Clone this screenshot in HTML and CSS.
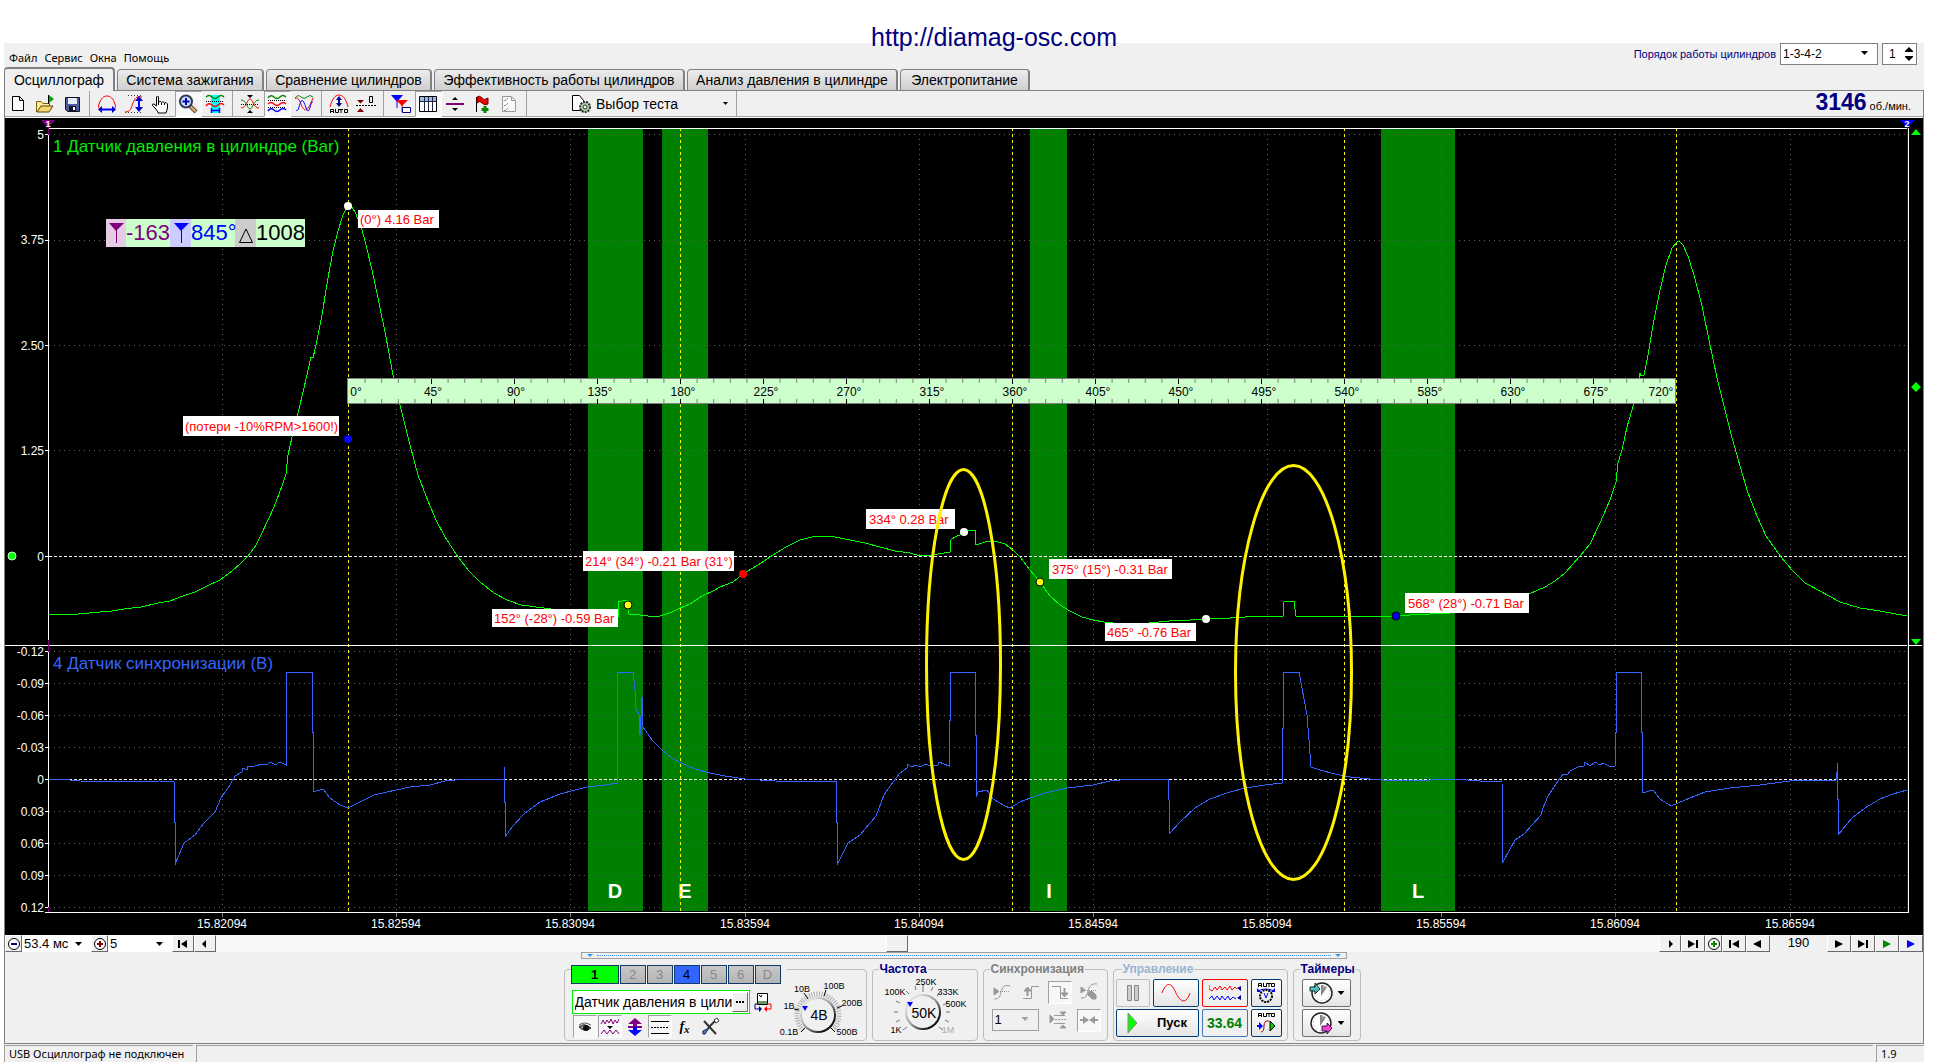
FILE: index.html
```html
<!DOCTYPE html>
<html lang="ru">
<head>
<meta charset="utf-8">
<title>Осциллограф</title>
<link rel="stylesheet" href="styles.css">
</head>
<body>
<a class="site-link" href="#">http://diamag-osc.com</a>
<div class="window">
  <header class="top">
    <nav class="menu">
      <a href="#">Файл</a><a href="#">Сервис</a><a href="#">Окна</a><a href="#">Помощь</a>
    </nav>
    <div class="order">
      <label for="order">Порядок работы цилиндров</label>
      <span class="pick pick-order"><select id="order"><option>1-3-4-2</option></select></span>
      <span class="spin"><input type="text" value="1" aria-label="Цилиндр"><svg width="8" height="14" viewBox="0 0 8 14"><path d="M0 4 4 0 8 4V5H0zM0 9H8V10L4 14 0 10z"/></svg></span>
    </div>
  </header>

  <div class="tabs" role="tablist">
    <button class="tab active" role="tab">Осциллограф</button>
    <button class="tab" role="tab">Система зажигания</button>
    <button class="tab" role="tab">Сравнение цилиндров</button>
    <button class="tab" role="tab">Эффективность работы цилиндров</button>
    <button class="tab" role="tab">Анализ давления в цилиндре</button>
    <button class="tab" role="tab">Электропитание</button>
  </div>

  <main class="workspace">
    <div class="toolbar">
      <button class="tool" aria-label="Новый"><svg class="ic" viewBox="0 0 20 20"><path d="M4.500 2.500H11.500L15.500 6.500V16.500H4.500zM11.500 2.500V6.500H15.500" fill="#fff" stroke="#000"/></svg></button>
      <button class="tool" aria-label="Открыть"><svg class="ic" viewBox="0 0 20 20"><path d="M1.500 18V7.500H6L8 9.500H14.500V12" fill="#ffe9a0" stroke="#7a6000"/><path d="M2 18 6 12H18L14 18z" fill="#f7d774" stroke="#5a4600"/><path d="M13.500 1V10" stroke="#000"/><path d="M14 1 19 5 14 9z" fill="#0a0"/></svg></button>
      <button class="tool" aria-label="Сохранить"><svg class="ic" viewBox="0 0 20 20"><path d="M3.500 3.500H17.500V17.500H5.500L3.500 15.500z" fill="#4a5a9a" stroke="#112"/><path d="M6 4H15V10H6z" fill="#e4ecf8"/><path d="M7 12H14V17H7z" fill="#112"/><path d="M11 13H13V16H11z" fill="#fff"/></svg></button>
      <i class="sep"></i>
      <button class="tool" aria-label="Ширина"><svg class="ic" viewBox="0 0 20 20" fill="none"><path d="M3 15C2 15 1 13 2 10C4 4 7 2 10 2S16 4 18 10C19 13 18 15 17 15" stroke="red"/><path d="M3 15.500H17" stroke="#00f" stroke-width="2"/><path d="M1 15.500 5 12V19zM19 15.500 15 12V19z" fill="#00c"/></svg></button>
      <button class="tool" aria-label="Высота"><svg class="ic" viewBox="0 0 20 20" fill="none"><path d="M1 18.500H19M4 1.500H19" stroke="#333" stroke-dasharray="1 2"/><path d="M1 18C7 18 7 14 9 9S12 2 18 3" stroke="red"/><path d="M15 5V15" stroke="#00f" stroke-width="2"/><path d="M11 7 15 2 19 7zM11 13 15 18 19 13z" fill="#00c"/></svg></button>
      <button class="tool" aria-label="Рука"><svg class="ic" viewBox="0 0 20 20"><path d="M7 18 4 14 1.500 11.500Q1 9.500 3 10L5.500 12V3Q6.500 1 7.500 3V8.500Q9 6 10.500 8.500Q12 6.500 13.500 9Q15 7.500 16.500 10V14L15 19H7zM10.500 9V11M13.500 9V11M7.500 8V11" fill="#fff" stroke="#000"/></svg></button>
      <button class="tool pressed" aria-label="Лупа"><svg class="ic" viewBox="0 0 20 20"><path d="M12 12 18 18" stroke="#543" stroke-width="4"/><path d="M12 12 17.500 17.500" stroke="#e8b870" stroke-width="2"/><circle cx="8" cy="7.500" r="6" fill="#c8e0ff" stroke="#335" stroke-width="2"/><path d="M8 4V11M4.500 7.500H11.500" stroke="#00a" stroke-width="2"/></svg></button>
      <button class="tool" aria-label="Участок"><svg class="ic" viewBox="0 0 20 20" fill="none"><path d="M6 1H15V19H6z" fill="#0ff"/><path d="M1 3Q4 0 7 3T13 3T19 3" stroke="#080" stroke-width="1.500"/><path d="M1 7.500H19" stroke="#000" stroke-dasharray="1 1"/><path d="M1 12Q4 8 7 11T13 11T19 11" stroke="red" stroke-width="1.500"/><path d="M6.500 14V19M14.500 14V19M7 16.500H14" stroke="#00f" stroke-width="1.500"/></svg></button>
      <i class="sep"></i>
      <button class="tool" aria-label="Свести"><svg class="ic" viewBox="0 0 20 20" fill="none"><path d="M1 14C7 14 7 5 10 5S13 14 19 14" stroke="red"/><path d="M1 6C7 6 7 15 10 15S13 6 19 6" stroke="#080"/><path d="M1 10.500H19" stroke="#000" stroke-dasharray="1 1"/><path d="M7 1H13L10 4zM7 19H13L10 16z" fill="#000"/></svg></button>
      <button class="tool pressed" aria-label="Раздельно"><svg class="ic" viewBox="0 0 20 20" fill="none"><path d="M1 4Q4 0 7 3T13 3T19 3" stroke="#080" stroke-width="1.500"/><path d="M1 10Q4 7 7 10T13 10T19 10" stroke="red" stroke-width="1.500"/><path d="M1 17Q4 13 7 16T13 16T19 16" stroke="#00f" stroke-width="1.500"/><path d="M1 6.500H19M1 13.500H19" stroke="#000" stroke-dasharray="1 1"/></svg></button>
      <button class="tool" aria-label="Наложить"><svg class="ic" viewBox="0 0 20 20" fill="none"><path d="M1 4Q4 0 7 3T13 3T19 3" stroke="#080"/><path d="M1 5C5 1 6 10 9 14S14 16 19 4" stroke="red"/><path d="M2 16C5 20 6 3 9 7S13 20 15 16S17 7 19 8" stroke="#00f"/></svg></button>
      <i class="sep"></i>
      <button class="tool" aria-label="Авто"><svg class="ic" viewBox="0 0 20 20" fill="none"><path d="M1 13C3 5 6 1 10 1S17 5 19 13" stroke="red"/><path d="M10 4V11" stroke="#008" stroke-width="2"/><path d="M7 6 10 2 13 6zM7 9 10 13 13 9z" fill="#008"/><path d="M1.500 19V15.500H4.500V19M1.500 17.500H4.500M6.500 15V18.500H9.500V15M10 15.500H14M12 15V19M15.500 15.500H18.500V18.500H15.500z" stroke="#000"/></svg></button>
      <button class="tool" aria-label="Ноль"><svg class="ic" viewBox="0 0 20 20" fill="none"><path d="M0 11.500H20" stroke="#000" stroke-dasharray="2 1"/><path d="M1 6H8L4.500 9.500zM1 18H8L4.500 14z" fill="#800000"/><path d="M13.500 2.500H16.500V8.500H13.500z" stroke="#000"/></svg></button>
      <i class="sep"></i>
      <button class="tool" aria-label="Маркеры"><svg class="ic" viewBox="0 0 20 20" fill="none"><path d="M0 1H12L6 8z" fill="#00f"/><path d="M6 6V14" stroke="#00f"/><path d="M5 6H17L11 12z" fill="red"/><path d="M11 10V18" stroke="red"/><path d="M11.500 13.500H19.500V18.500H11.500z" fill="#fff" stroke="#008"/></svg></button>
      <button class="tool pressed" aria-label="Таблица"><svg class="ic" viewBox="0 0 20 20" fill="none"><path d="M1.500 2.500H18.500V17.500H1.500z" fill="#fff" stroke="#000"/><path d="M2 3H18V7H2z" fill="#9bd"/><path d="M2 7.500H18M6.500 3V17M10.500 3V17M14.500 3V17" stroke="#224"/></svg></button>
      <button class="tool" aria-label="Линия"><svg class="ic" viewBox="0 0 20 20"><path d="M1 9H19V11H1z" fill="#800080"/><path d="M7 6H13L10 3zM7 14H13L10 17z"/></svg></button>
      <button class="tool" aria-label="Флаг"><svg class="ic" viewBox="0 0 20 20"><path d="M4.500 3V18" stroke="#000"/><path d="M5 3Q8 1 10 4T16 4V10Q12 12 10 9T5 9z" fill="#e00" stroke="#600"/><path d="M13 12V19M9.500 15.500H16.500" stroke="#080" stroke-width="3"/></svg></button>
      <button class="tool" aria-label="Список"><svg class="ic" viewBox="0 0 20 20" fill="none"><path d="M3.500 2.500H12.500L16.500 6.500V17.500H3.500z" fill="#f8f8f8" stroke="#999"/><path d="M5 6 6 7 9 4M5 11 6 12 9 9M5 16 6 17 9 14M12.500 3V6.500H16" stroke="#999"/></svg></button>
      <i class="sep"></i>
      <button class="test"><svg class="ic" viewBox="0 0 20 20"><path d="M1.500 1.500H8.500L12.500 6.500V16.500H1.500z" fill="#fff" stroke="#000"/><circle cx="14" cy="13" r="5" fill="#bcb" stroke="#232" stroke-width="2" stroke-dasharray="2 1"/><circle cx="14" cy="13" r="2" fill="#fff" stroke="#232"/></svg><span>Выбор теста</span><i class="caret"></i></button>
      <i class="sep"></i>
      <output class="rpm"><b>3146</b> об./мин.</output>
    </div>

    <svg class="chart" viewBox="5 118 1918 817" role="img" aria-label="Осциллограмма">
      <path class="band" d="M588 129H643V911H588zM662 129H708V911H662zM1030 129H1067V911H1030zM1381 129H1455V911H1381z"/>
      <path class="grid" d="M49 134.500H1906M49 240.500H1906M49 345.500H1906M49 450.500H1906M49 651.500H1906M49 683.500H1906M49 715.500H1906M49 747.500H1906M49 811.500H1906M49 843.500H1906M49 875.500H1906M49 907.500H1906"/>
      <path class="grid grid-v" d="M222.500 134V911M396.500 134V911M570.500 134V911M745.500 134V911M919.500 134V911M1093.500 134V911M1267.500 134V911M1441.500 134V911M1615.500 134V911M1790.500 134V911"/>
      <path class="zero" d="M49 556.500H1906M49 779.500H1906"/>
      <g class="band-name"><text x="615" y="898">D</text><text x="685" y="898">E</text><text x="1049" y="898">I</text><text x="1418" y="898">L</text></g>
      <path class="cursor" d="M348.500 128V911M680.500 128V911M1012.500 128V911M1344.500 128V911M1676.500 128V911"/>

      <path class="trace pressure" d="M49 614L62 615 78 614 100 612 112 611 124 609 141 607 158 603 170 601 183 596 195 592 207 586 220 580 232 571 241 563 248 556 256 545 262 533 268 520 274 507 279 494 283 483 286 474 288 455 292 437 298 413 304 388 311 357 313 358 316 345 322 315 328 278 333 251 338 231 343 215 348 206 351 206 355 212 361 226 366 245 372 270 378 298 386 337 393 375 400 405 410 445 418 475 428 501 436 520 445 537 458 557 469 571 480 582 494 593 507 600 521 605 544 608 580 613 618 616 618 602 622 601 628 600 629 614 640 615 648 616 660 616 672 612 680 608 690 604 702 596 713 591 720 587 733 582 743 574 758 565 773 555 786 547 800 540 812 537 825 536 835 537 850 540 865 543 880 547 895 551 910 553 920 556 932 555 950 552 951 540 955 537 962 534 968 531 975 530 976 545 985 542 995 541 1005 544 1013 550 1020 557 1030 570 1040 582 1050 596 1060 605 1070 611 1082 617 1093 620 1104 622 1130 625 1169 621 1190 620 1206 619 1230 618 1245 617 1283 616 1284 602 1294 601 1296 616 1395 616 1410 615 1450 613 1490 607 1529 594 1545 587 1555 581 1565 573 1580 556 1590 544 1600 523 1610 500 1616 482 1618 463 1622 450 1627 427 1634 403 1640 373 1641 376 1644 375 1648 355 1653 325 1660 290 1666 265 1672 248 1677 242 1679 241 1683 245 1688 256 1694 275 1702 306 1709 340 1717 378 1724 406 1731 434 1740 466 1748 493 1757 516 1766 536 1781 557 1792 570 1805 583 1820 591 1840 602 1860 608 1880 611 1907 616"/>
      <path class="trace sync" d="M49 779H60L80 781 120 782 160 781 174 782V822H175V865L176 862 184 843 195 835 204 823 215 812 221 798 230 785 235 776 242 772 243 768 247 770 248 766 255 766 262 764 266 765 271 762 275 765 280 762 286 765V672H312V732H313V792L323 789 330 798 340 805 348 808 360 802 374 795 396 790 410 787 430 785 445 781 465 779H504V767 802H505V837L512 827 524 814 540 802 550 798 560 794 575 790 587 787 605 785 617 783V672H633L635 690V708L639 714 640 735 642 697 643 727 652 740 662 750 672 758 681 763 695 769 710 773 725 776 745 779 775 781 836 782V822H837V865L848 843 860 835 876 816 884 795 893 782 900 773 907 768 908 764 911 767 916 765 920 767 926 764 930 766 938 765 939 762 949 766V720H950V672H975V735H976V797L978 792 987 790 993 799 1005 806 1010 808 1020 802 1030 798 1045 793 1067 788 1093 785 1110 781 1130 779H1168L1169 800 1170 833 1180 822 1195 808 1210 799 1230 792 1245 788 1265 785 1282 783V728H1283V672H1299L1302 688 1307 715 1309 740 1311 767 1320 770 1335 774 1350 777 1370 779 1395 781 1430 780 1455 779 1480 781 1502 782 1503 862 1515 840 1524 834 1541 815 1543 808 1548 796 1558 781 1563 774 1568 774 1570 771 1578 767 1584 766 1585 762 1590 766 1595 762 1600 765 1603 763 1611 767 1615 766V732H1616V672H1641V732H1642V793L1653 790 1660 799 1671 806 1685 800 1705 792 1730 788 1760 785 1790 781 1836 780V772H1837V763 799H1838V835L1852 818 1865 808 1880 799 1893 794 1907 790"/>

      <g class="axis"><path d="M48.500 134V912M48 128.500H1908M5 645.500H1922M45 912.500H1908M1908.500 128V913"/>
      <path d="M45 134.500H48M45 240.500H48M45 345.500H48M45 450.500H48M45 556.500H48M45 651.500H48M45 683.500H48M45 715.500H48M45 747.500H48M45 779.500H48M45 811.500H48M45 843.500H48M45 875.500H48M45 907.500H48"/></g>
      <path class="x-tick" d="M222.500 913V917M396.500 913V917M570.500 913V917M745.500 913V917M919.500 913V917M1093.500 913V917M1267.500 913V917M1441.500 913V917M1615.500 913V917M1790.500 913V917"/>
      <g class="y-label"><text x="44" y="139">5</text><text x="44" y="244">3.75</text><text x="44" y="350">2.50</text><text x="44" y="455">1.25</text><text x="44" y="561">0</text><text x="44" y="656">-0.12</text><text x="44" y="688">-0.09</text><text x="44" y="720">-0.06</text><text x="44" y="752">-0.03</text><text x="44" y="784">0</text><text x="44" y="816">0.03</text><text x="44" y="848">0.06</text><text x="44" y="880">0.09</text><text x="44" y="912">0.12</text></g>
      <g class="x-label"><text x="222" y="928">15.82094</text><text x="396" y="928">15.82594</text><text x="570" y="928">15.83094</text><text x="745" y="928">15.83594</text><text x="919" y="928">15.84094</text><text x="1093" y="928">15.84594</text><text x="1267" y="928">15.85094</text><text x="1441" y="928">15.85594</text><text x="1615" y="928">15.86094</text><text x="1790" y="928">15.86594</text></g>
      <text class="channel-name green" x="53" y="152">1 Датчик давления в цилиндре (Bar)</text>
      <text class="channel-name blue" x="53" y="669">4 Датчик синхронизации (В)</text>

      <path d="M41 120H55L48 128z" fill="#800080"/><path d="M48.500 126V135M48.500 640V652M48.500 907V912" stroke="#800080"/>
      <path d="M1900 120H1915L1907 128z" fill="#00f"/><path d="M1907.500 126V912" stroke="#00f"/>
      <g class="flag-no"><text x="48" y="127">1</text><text x="1907" y="127">2</text></g>
      <path d="M1911 135H1921L1916 129zM1916 382L1921 387 1916 392 1911 387zM1911 639H1921L1916 645z" fill="#0f0"/>
      <circle cx="12" cy="556" r="4" fill="#0f0" stroke="#cfc"/>

      <g class="ruler">
        <path class="ruler-box" d="M347.500 378.500H1675.500V403.500H347.500z"/>
        <path class="minor" d="M364.600 381H1675M364.600 401H1675"/>
        <path class="major" d="M431 381.500H1632M431 401.500H1632"/>
        <text x="356" y="396">0°</text><text x="433" y="396">45°</text><text x="516" y="396">90°</text><text x="600" y="396">135°</text><text x="683" y="396">180°</text><text x="766" y="396">225°</text><text x="849" y="396">270°</text><text x="932" y="396">315°</text><text x="1015" y="396">360°</text><text x="1098" y="396">405°</text><text x="1181" y="396">450°</text><text x="1264" y="396">495°</text><text x="1347" y="396">540°</text><text x="1430" y="396">585°</text><text x="1513" y="396">630°</text><text x="1596" y="396">675°</text><text x="1661" y="396">720°</text>
      </g>

      <g class="readout">
        <path d="M106 219H305V247H106z" fill="#cfc"/><path d="M106 219H126V247H106z" fill="#e4cce4"/><path d="M170 219H191V247H170z" fill="#ccf"/><path d="M235 219H256V247H235z" fill="#ccc"/>
        <path d="M109 223H124L116 231zM116 230H117V243H116z" fill="#800080"/><path d="M174 223H189L181 231zM181 230H182V243H181z" fill="#00f"/><path d="M246 229L252.500 242.500H239.500z" fill="none" stroke="#000"/>
        <text x="126" y="240" fill="#800080">-163</text><text x="191" y="240" fill="#00f">845°</text><text x="256" y="240">1008</text>
      </g>

      <path class="note-box" d="M358 210H439V228H358zM183 416H339V436H183zM492 609H618V627H492zM583 551H734V571H583zM866 509H955V529H866zM1049 559H1172V579H1049zM1105 623H1196V641H1105zM1405 593H1529V613H1405z"/>
      <g class="note"><text x="360" y="224">(0°) 4.16 Bar</text><text x="185" y="431">(потери -10%RPM&gt;1600!)</text><text x="494" y="623">152° (-28°) -0.59 Bar</text><text x="585" y="566">214° (34°) -0.21 Bar (31°)</text><text x="869" y="524">334° 0.28 Bar</text><text x="1052" y="574">375° (15°) -0.31 Bar</text><text x="1107" y="637">465° -0.76 Bar</text><text x="1408" y="608">568° (28°) -0.71 Bar</text></g>
      <g class="dots"><circle cx="348" cy="206" r="4" fill="#fff"/><circle cx="348" cy="439" r="4" fill="#00f"/><circle cx="628" cy="605" r="4" fill="#ff0" stroke="#000"/><circle cx="743" cy="574" r="4" fill="red"/><circle cx="964" cy="532" r="4" fill="#fff"/><circle cx="1040" cy="582" r="4" fill="#ff0" stroke="#000"/><circle cx="1206" cy="619" r="4" fill="#fff"/><circle cx="1396" cy="616" r="4" fill="#00f" stroke="#000"/></g>
      <ellipse class="mark" cx="963.500" cy="664.500" rx="37" ry="195"/><ellipse class="mark" cx="1293.500" cy="672.500" rx="58" ry="207"/>
    </svg>

    <div class="scroll">
      <button class="key w16" aria-label="Уменьшить"><svg width="14" height="14" viewBox="0 0 14 14"><circle cx="7" cy="7" r="5.500" fill="#fff" stroke="#000"/><path d="M4 6H10V8H4z" fill="#008"/></svg></button>
      <span class="pick pick-time"><select aria-label="Время"><option>53.4 мс</option></select></span>
      <button class="key w16" aria-label="Увеличить"><svg width="14" height="14" viewBox="0 0 14 14"><circle cx="7" cy="7" r="5.500" fill="#fff" stroke="#000"/><path d="M4 6H6V4H8V6H10V8H8V10H6V8H4z" fill="#800"/></svg></button>
      <span class="pick pick-scale"><select aria-label="Масштаб"><option>5</option></select></span>
      <button class="key" aria-label="В начало"><svg width="10" height="8" viewBox="0 0 10 8"><path d="M0 0H2V8H0zM9 0V8L3 4z"/></svg></button>
      <button class="key" aria-label="Назад"><svg width="10" height="8" viewBox="0 0 10 8"><path d="M6 0V8L2 4z"/></svg></button>
      <div class="track"><button class="thumb" aria-label="Прокрутка"></button></div>
      <button class="key" aria-label="Вперёд"><svg width="10" height="8" viewBox="0 0 10 8"><path d="M4 0V8L8 4z"/></svg></button>
      <button class="key wide" aria-label="В конец"><svg width="10" height="8" viewBox="0 0 10 8"><path d="M8 0H10V8H8zM0 0V8L7 4z"/></svg></button>
      <button class="key w16" aria-label="Добавить"><svg width="14" height="14" viewBox="0 0 14 14"><circle cx="7" cy="7" r="5.500" fill="#fff" stroke="#000"/><path d="M4 6H6V4H8V6H10V8H8V10H6V8H4z" fill="#080"/></svg></button>
      <button class="key wide" aria-label="Первый кадр"><svg width="10" height="8" viewBox="0 0 10 8"><path d="M0 0H2V8H0zM10 0V8L3 4z"/></svg></button>
      <button class="key wide" aria-label="Пред. кадр"><svg width="10" height="8" viewBox="0 0 10 8"><path d="M8 0V8L0 4z"/></svg></button>
      <output class="frame">190</output>
      <button class="key wide" aria-label="След. кадр"><svg width="10" height="8" viewBox="0 0 10 8"><path d="M1 0V8L9 4z"/></svg></button>
      <button class="key wide" aria-label="Последний кадр"><svg width="10" height="8" viewBox="0 0 10 8"><path d="M8 0H10V8H8zM0 0V8L7 4z"/></svg></button>
      <button class="key wide" aria-label="Воспроизвести"><svg width="10" height="8" viewBox="0 0 10 8"><path d="M1 0V8L9 4z" fill="#080"/></svg></button>
      <button class="key wide" aria-label="Воспроизвести всё"><svg width="10" height="8" viewBox="0 0 10 8"><path d="M1 0V8L9 4z" fill="#00f"/></svg></button>
    </div>

    <div class="fold"><i></i><span></span><i></i></div>

    <div class="panel">
      <section class="group channel">
        <div class="channel-left">
          <div class="channels"><button class="ch on1">1</button><button class="ch">2</button><button class="ch">3</button><button class="ch on4">4</button><button class="ch">5</button><button class="ch">6</button><button class="ch">D</button></div>
          <div class="sensor"><span class="sensor-box"><input type="text" value="Датчик давления в цилиндре" aria-label="Датчик"><button aria-label="Выбрать датчик"><svg width="8" height="2" viewBox="0 0 8 2"><path d="M0 0H2V2H0zM3 0H5V2H3zM6 0H8V2H6z"/></svg></button></span>
            <svg class="ic" viewBox="0 0 20 20"><path d="M4.500 1.500H14.500V12.500H4.500z" fill="#fff" stroke="#000"/><path d="M5 9H14V12H5z" fill="#696"/><path d="M6 3 8 5 9 3" stroke="#000" fill="none"/><path d="M5 12H2V17H7" fill="none" stroke="#008"/><path d="M6 14V20L9 17z" fill="#008"/><path d="M14 12H18V17H13" fill="none" stroke="red"/><path d="M14 14V20L11 17z" fill="red"/></svg></div>
          <div class="modes">
            <button class="mode pressed" aria-label="Показать"><svg class="ic" viewBox="0 0 20 20"><path d="M4 10Q9 5 16 11Q10 16 4 10z" fill="#987" stroke="#222"/><circle cx="11" cy="11" r="3" fill="#111"/><path d="M4 8Q9 4 16 8" stroke="#555" fill="none"/></svg></button>
            <button class="mode pressed" aria-label="Инверсия"><svg class="ic" viewBox="0 0 20 20" fill="none" stroke="#800080"><path d="M1 7 3 3 5 7 7 3 9 6 11 2 13 7 15 3 17 6 19 2M1 17 4 13 7 17 10 13 13 17 16 13 19 17"/><path d="M7 9H13L10 12z" fill="#000" stroke="none"/></svg></button>
            <button class="mode" aria-label="Сдвиг"><svg class="ic" viewBox="0 0 20 20"><path d="M10 1 17 7H12V10H8V7H3zM3 9H8V11H3zM12 9H17V11H12z" fill="#800080"/><path d="M10 19 17 13H12V10H8V13H3z" fill="#00f"/></svg></button>
            <button class="mode pressed" aria-label="Линии"><svg class="ic" viewBox="0 0 20 20" stroke="#000"><path d="M1 4.500H19M1 16.500H19"/><path d="M1 10.500H19" stroke-dasharray="2 1"/></svg></button>
            <button class="mode fx" aria-label="Функция"><i>f</i><sub>x</sub></button>
            <button class="mode" aria-label="Настройка"><svg class="ic" viewBox="0 0 20 20"><path d="M4 4 16 17M16 3 8 11" stroke="#333" stroke-width="2"/><path d="M17 1 19 4 16 6 14 3z" fill="#fff" stroke="#333"/><path d="M9 11 5 17Q2 18 3 14z" fill="#57b" stroke="#124"/></svg></button>
          </div>
        </div>
        <svg class="dial" viewBox="765 968 105 70" aria-label="Чувствительность">
          <g fill="none"><path d="M803.100 1027.900A21 21 0 1 1 832.900 1027.900" stroke="#aaa" stroke-width="5" stroke-dasharray="1 1.500"/>
          <path d="M806 1025 801 1030M799 1008 794 1007M808 997 804 991M824 994 826 988M837 1006 842 1004M830 1025 835 1030" stroke="#000"/></g>
          <circle cx="818" cy="1013" r="18" fill="url(#knob)" /><circle cx="818" cy="1013" r="16" fill="#f0f0f0"/>
          <path d="M802 1004H808L805 1009z" fill="#00f"/>
          <g class="dial-no"><text x="789" y="1033">0.1B</text><text x="789" y="1007">1B</text><text x="802" y="990">10B</text><text x="834" y="987">100B</text><text x="852" y="1004">200B</text><text x="847" y="1033">500B</text></g>
          <text class="dial-val" x="819" y="1018">4B</text>
          <defs><linearGradient id="knob" x1="0" y1="0" x2="1" y2="1"><stop offset=".2" stop-color="#ddd"/><stop offset=".5" stop-color="#999"/><stop offset=".8" stop-color="#111"/></linearGradient></defs>
        </svg>
      </section>

      <fieldset class="group"><legend>Частота</legend>
        <svg class="dial dial-f" viewBox="874 976 100 62" aria-label="Частота">
          <path d="M908 1027 904 1030M901 1020 897 1022M899 1012H895M901 1003 897 1001M910 994 907 991M917 990 916 986M924 992V984M932 991 934 987M938 996 941 992M944 1005 949 1003M947 1012H951M946 1020 950 1022M940 1027 944 1030" fill="none" stroke="#777"/>
          <circle cx="924" cy="1012" r="18" fill="url(#knob)"/><circle cx="924" cy="1012" r="16" fill="#f0f0f0"/>
          <path d="M908 1002H914L911 1007z" fill="#00f"/>
          <g class="dial-no"><text x="897" y="1033">1K</text><text x="896" y="995">100K</text><text x="927" y="985">250K</text><text x="949" y="995">333K</text><text x="957" y="1007">500K</text><text x="949" y="1033" fill="#aaa">1M</text></g>
          <text class="dial-val" x="925" y="1018">50K</text>
        </svg>
      </fieldset>

      <fieldset class="group sync-box" disabled><legend>Синхронизация</legend>
        <div class="row">
          <button class="mode" aria-label="Без синхронизации"><svg class="ic" viewBox="0 0 20 20" fill="none" stroke="#999"><path d="M2 17C8 17 8 14 9 10S12 2 18 4"/><path d="M2 9.500H18" stroke-dasharray="1 1"/><path d="M2 6V13L7 9.500z" fill="#999"/></svg></button>
          <button class="mode" aria-label="Фронт"><svg class="ic" viewBox="0 0 20 20" fill="none" stroke="#999"><path d="M2 16.500H10.500V4.500H18"/><path d="M6.500 8V14" stroke-width="2"/><path d="M3 9H10L6.500 5z" fill="#999"/></svg></button>
          <button class="mode pressed" aria-label="Спад"><svg class="ic" viewBox="0 0 20 20" fill="none" stroke="#999"><path d="M2 4.500H10.500V16.500H18"/><path d="M14.500 6V12" stroke-width="2"/><path d="M11 11H18L14.500 15z" fill="#999"/></svg></button>
          <button class="mode" aria-label="Вручную"><svg class="ic" viewBox="0 0 20 20" fill="none" stroke="#999"><path d="M2 16C8 16 8 13 9 9S12 1 18 2"/><path d="M2 8.500H18" stroke-dasharray="1 1"/><path d="M2 5V11L6 8zM9 10 13 9 17 13V17H13L9 13z" fill="#999"/></svg></button>
        </div>
        <div class="row">
          <span class="pick pick-sync"><select aria-label="Канал"><option>1</option></select></span>
          <button class="mode" aria-label="Уровень"><svg class="ic" viewBox="0 0 20 20" fill="none" stroke="#999"><path d="M2 5V13L6 9z" fill="#999"/><path d="M6 5.500H17M6 13.500H17M12 2H18L15 5zM12 18H18L15 15z" fill="#999"/><path d="M7 9.500H18" stroke-dasharray="2 1"/></svg></button>
          <button class="mode pressed" aria-label="Центр"><svg class="ic" viewBox="0 0 20 20" fill="#999"><path d="M1 9H4V6L10 10 4 14V11H1zM19 9H16V6L10 10 16 14V11H19z"/></svg></button>
        </div>
      </fieldset>

      <fieldset class="group control"><legend>Управление</legend>
        <button class="cmd off" aria-label="Пауза"><svg width="12" height="16" viewBox="0 0 12 16"><path d="M.500.500H4.500V15.500H.500zM7.500.500H11.500V15.500H7.500z" fill="#ccc" stroke="#888"/></svg></button>
        <button class="cmd" aria-label="Синус"><svg width="30" height="20" viewBox="0 0 30 20" fill="none" stroke="red"><path d="M1 10C5 -1 10 -1 14 8S24 24 29 10"/></svg></button>
        <button class="cmd red" aria-label="Сигналы"><svg width="32" height="20" viewBox="0 0 32 20" fill="none"><path d="M0 2V6L3 8 6 4 8 7 11 3 13 7 16 4 18 7 21 3 23 7 26 4 28 6" stroke="red"/><path d="M0 16 3 13 5 17 8 13 11 17 13 13 16 17 19 13 21 17 24 14 27 16" stroke="#00f"/><path d="M32 3V8L28 5zM32 12V17L28 15z" fill="#008"/></svg></button>
        <button class="cmd" aria-label="Авто напряжение"><svg width="20" height="22" viewBox="0 0 20 22" fill="none" stroke="#000"><path d="M2.500 5V1.500H5.500V5M2.500 3.500H5.500M7.500 1V4.500H10.500V1M11 1.500H15M13 1V5M15.500 1.500H18.500V4.500H15.500z"/><path d="M2 9Q10 5 18 9" stroke="#00f"/><path d="M1 6V10H5zM19 6V10H15z" fill="#00f" stroke="none"/><circle cx="10" cy="14" r="6" stroke-width="2" stroke-dasharray="2 1"/><path d="M8 11 10 16 12 11" stroke="#00f"/></svg></button>
        <button class="cmd start"><svg width="10" height="20" viewBox="0 0 10 20"><path d="M1 0V20L10 10z" fill="#0f0" stroke="#888"/></svg><span>Пуск</span></button>
        <output class="cmd freq">33.64</output>
        <button class="cmd" aria-label="Авто запуск"><svg width="20" height="22" viewBox="0 0 20 22" fill="none" stroke="#000"><path d="M2.500 5V1.500H5.500V5M2.500 3.500H5.500M7.500 1V4.500H10.500V1M11 1.500H15M13 1V5M15.500 1.500H18.500V4.500H15.500z"/><path d="M1 14H4" stroke="#00f" stroke-width="2"/><path d="M3 10V18L7 14z" fill="#00f" stroke="none"/><path d="M5 20Q8 20 8 14T13 9" stroke="#a00"/><path d="M14 9V19L19 14z" fill="#0c0"/></svg></button>
      </fieldset>

      <fieldset class="group timers"><legend>Таймеры</legend>
        <button class="cmd timer" aria-label="Таймер пуска"><svg width="24" height="24" viewBox="0 0 24 24"><circle cx="13" cy="12" r="10" fill="#fff" stroke="#222" stroke-width="1.500"/><path d="M13 4V12L17 6" fill="#aaa" stroke="#888" stroke-width="2"/><circle cx="13" cy="12" r="7.500" fill="none" stroke="#aaa" stroke-dasharray="1 3"/><path d="M1 6H6V2L11 8 6 13V10H1z" fill="#5bb" stroke="#133"/></svg><i class="caret"></i></button>
        <button class="cmd timer" aria-label="Таймер остановки"><svg width="24" height="24" viewBox="0 0 24 24"><circle cx="12" cy="12" r="10" fill="#fff" stroke="#222" stroke-width="1.500"/><path d="M12 4V12L16 6" fill="#aaa" stroke="#888" stroke-width="2"/><circle cx="12" cy="12" r="7.500" fill="none" stroke="#aaa" stroke-dasharray="1 3"/><path d="M13 15H18V12L23 17 18 23V20H13z" fill="#e4c" stroke="#415"/></svg><i class="caret"></i></button>
      </fieldset>
    </div>
  </main>

  <footer class="status"><span>USB Осциллограф не подключен</span><span></span><span>1.9</span></footer>
</div>
</body>
</html>
```
FILE: styles.css
```css
* { box-sizing: border-box; }
body { margin: 0; background: #fff; color: #000; font: 13px/16px "Liberation Sans", Arial, sans-serif; }
button, input, select, output { font: inherit; color: inherit; margin: 0; padding: 0; border: 0; border-radius: 0; background: none; }
svg { display: block; flex: none; }
i { font-style: normal; }

.site-link { position: absolute; top: 23px; left: 50px; right: 0; margin: 0 auto; width: max-content; color: #000080; font-size: 25px; line-height: 28px; text-decoration: none; }
.window { margin: 43px 14px 5px 4px; background: #f0f0f0; }

.top { display: flex; justify-content: space-between; height: 24px; }
.menu { display: flex; gap: 7px; padding: 7px 0 0 5px; font: 11px/16px "Noto Sans", sans-serif; }
.menu a { color: #000; text-decoration: none; }
.order { display: flex; align-items: center; gap: 4px; height: 22px; margin-right: 7px; color: #000080; font-size: 11px; }
.order select, .order input { color: #000; font-size: 12px; }
.pick { position: relative; display: flex; background: #fff; }
.pick select { appearance: none; width: 100%; padding-left: 2px; }
.pick::after, .caret { content: ""; width: 7px; height: 4px; background: #000; clip-path: polygon(0 0, 100% 0, 50% 100%); }
.pick::after { position: absolute; right: 9px; top: 7px; pointer-events: none; }
.pick-order { width: 98px; height: 22px; border: 1px solid #808080; }
.spin { display: flex; align-items: center; gap: 4px; width: 35px; height: 22px; padding: 0 6px; border: 1px solid #808080; background: #fff; }
.spin input { width: 12px; }

.tabs { display: grid; grid-template-columns: 111px 147px 166px 251px 211px 130px; column-gap: 2px; align-items: end; height: 24px; margin-bottom: -1px; position: relative; }
.tab { height: 22px; border: 1px solid #808080; border-right-width: 2px; border-radius: 4px 4px 0 0; background: linear-gradient(#ececec, #cfcfcf); font-size: 14px; white-space: nowrap; }
.tab.active { height: 24px; border-width: 2px 2px 0 1px; background: #f0f0f0; }

.workspace { border: 1px solid #808080; }
.toolbar { display: flex; align-items: center; height: 26px; border-bottom: 1px solid #a0a0a0; background: #f0f0f0; }
.tool { display: flex; align-items: center; justify-content: center; width: 27px; height: 26px; padding-right: 1px; }
.ic { width: 20px; height: 20px; }
.pressed { background: repeating-conic-gradient(#fff 0 25%, #f0f0f0 0 50%) 0 0 / 2px 2px; border: 1px solid; border-color: #a0a0a0 #fff #fff #a0a0a0; }
.sep { width: 8px; height: 26px; background: linear-gradient(#a0a0a0, #a0a0a0) 3px 0 / 1px 100% no-repeat; }
.test { display: flex; align-items: center; gap: 5px; width: 202px; padding-left: 40px; font-size: 14px; }
.test .caret { margin-left: auto; margin-right: 5px; width: 5px; height: 3px; }
.rpm { margin-left: auto; margin-right: 12px; font-size: 11px; }
.rpm b { color: #000080; font-size: 23px; }

.chart { width: 100%; height: auto; background: #000; border-top: 1px solid #fff; }
.band { fill: #008000; }
.grid { stroke: #606060; stroke-dasharray: 1 4; fill: none; }
.zero { stroke: #fff; stroke-dasharray: 3 2; fill: none; }
.cursor { stroke: #ff0; stroke-dasharray: 3 3; fill: none; }
.band-name { fill: #fff; font-weight: bold; font-size: 20px; text-anchor: middle; }
.trace { fill: none; shape-rendering: crispEdges; }
.pressure { stroke: #0f0; }
.sync { stroke: #36f; }
.axis { stroke: #fff; fill: none; }
.x-tick { stroke: #808080; }
.y-label, .x-label { fill: #fff; font-size: 12px; }
.y-label { text-anchor: end; }
.x-label { text-anchor: middle; }
.channel-name { font-size: 17px; }
.green { fill: #0e0; }
.blue { fill: #36f; }
.flag-no { fill: #fff; font-size: 9px; font-weight: bold; text-anchor: middle; }
.ruler { font-size: 12px; text-anchor: middle; }
.ruler-box { fill: #cfc; stroke: #808080; }
.minor { stroke: #808080; stroke-width: 4; stroke-dasharray: 1 15.6; }
.major { stroke: #000; stroke-width: 5; stroke-dasharray: 1 82; }
.readout { font-size: 22px; }
.note-box { fill: #fff; }
.note { fill: red; font-size: 13px; }
.mark { fill: none; stroke: #fff200; stroke-width: 3; }

.scroll { display: flex; height: 17px; background: #fff; }
.key, .thumb { display: flex; align-items: center; justify-content: center; width: 22px; background: #f0f0f0; border: 1px solid; border-color: #fff #696969 #696969 #fff; }
.key.w16 { width: 17px; }
.key.wide { width: 24px; }
.pick-time { width: 69px; }
.pick-scale { width: 64px; }
.track { display: flex; flex: 1; justify-content: center; background: repeating-conic-gradient(#fff 0 25%, #f0f0f0 0 50%) 0 0 / 2px 2px; }
.thumb { margin-right: 82px; }
.frame { width: 57px; background: #f0f0f0; text-align: center; }

.fold { display: flex; align-items: center; gap: 4px; width: 766px; height: 7px; margin: 0 auto; padding: 0 5px; border: 1px solid #a0a0a0; }
.fold i { width: 6px; height: 3px; background: #39f; clip-path: polygon(0 0, 100% 0, 50% 100%); }
.fold span { flex: 1; border-top: 1px dotted #39f; }

.panel { display: flex; justify-content: center; align-items: stretch; gap: 5px; padding: 3px 4px 2px 0; }
.group { margin: 0; padding: 0; min-width: 0; border: 1px solid #bdbdbd; border-radius: 4px; }
.group legend { margin-left: 6px; padding: 0 1px; color: #000080; font-weight: bold; font-size: 12px; line-height: 14px; }
.channel { display: flex; width: 303px; height: 72px; margin-top: 7px; }
.channel-left { width: 201px; padding-left: 6px; }
.channels { display: flex; gap: 1px; width: 216px; margin-top: -5px; background: #f0f0f0; position: relative; }
.ch { flex: none; width: 26px; height: 19px; border: 1px solid #123a66; background: linear-gradient(#c8c8c8, #b4b4b4); color: #888; }
.ch.on1 { width: 48px; background: #0f0; color: #000; font-weight: bold; }
.ch.on4 { background: #36f; color: #000; }
.sensor { display: flex; align-items: center; gap: 3px; margin: 6px 0 1px 1px; }
.sensor-box { display: flex; width: 178px; height: 24px; padding: 1px; border: 1px solid #0e0; background: #fff; }
.sensor input { flex: 1; min-width: 0; padding-left: 1px; font-size: 14px; }
.sensor button { display: flex; align-items: center; justify-content: center; width: 16px; background: #f0f0f0; border: 1px solid; border-color: #fff #696969 #696969 #fff; }
.modes { display: flex; gap: 1px; margin-left: 2px; }
.mode { display: flex; align-items: center; justify-content: center; width: 24px; height: 23px; }
.fx { font: italic bold 14px/16px "Liberation Serif", serif; }
.fx i { font-style: italic; }
.fx sub { font-size: 11px; line-height: 12px; vertical-align: baseline; margin-top: 4px; }
.dial { width: 105px; height: 70px; margin-left: -1px; }
.dial-f { width: 100px; height: 62px; margin: 0 4px 0 0; }
.dial-no { font-size: 9px; text-anchor: middle; }
.dial-val { font-size: 14px; text-anchor: middle; }

.group.sync-box { width: 125px; padding: 2px 6px 0; }
.sync-box legend { margin-left: 0; color: #808080; }
.sync-box .row { display: flex; justify-content: space-between; align-items: center; height: 28px; }
.pick-sync { width: 47px; height: 22px; margin-left: 2px; border: 1px solid #a0a0a0; background: #f0f0f0; }
.sync-box select { opacity: 1; color: #000; }
.pick-sync::after { background: #a0a0a0; }

.group.control { display: grid; grid-template-columns: 34px 46px 46px 31px; gap: 2px 3px; padding: 3px 4px 0 2px; align-content: start; width: 175px; }
.control legend { color: #99b4d1; }
.cmd { display: flex; align-items: center; justify-content: center; height: 28px; border: 1px solid #003c74; border-radius: 2px; background: linear-gradient(#fff, #e4e4e4); }
.cmd.off { border-color: #bdbdbd; background: #f0f0f0; }
.cmd.red { border-color: red; background: #f0f0f0; }
.start { grid-column: span 2; gap: 20px; font-weight: bold; }
.freq { border-color: #3a78b8; background: #f0f0f0; color: #008000; font-weight: bold; font-size: 14px; }
.group.timers { display: grid; gap: 2px; align-content: start; justify-content: center; padding-top: 3px; width: 68px; }
.timer { gap: 5px; width: 49px; border-color: #707070; }

.status { display: grid; grid-template-columns: 189px 1fr 48px; gap: 3px; height: 18px; padding-top: 1px; background: #f0f0f0; font: 11px/16px "Noto Sans", sans-serif; }
.status span { padding-left: 4px; border: solid #a0a0a0; border-width: 1px 0 0 1px; white-space: nowrap; }
```
